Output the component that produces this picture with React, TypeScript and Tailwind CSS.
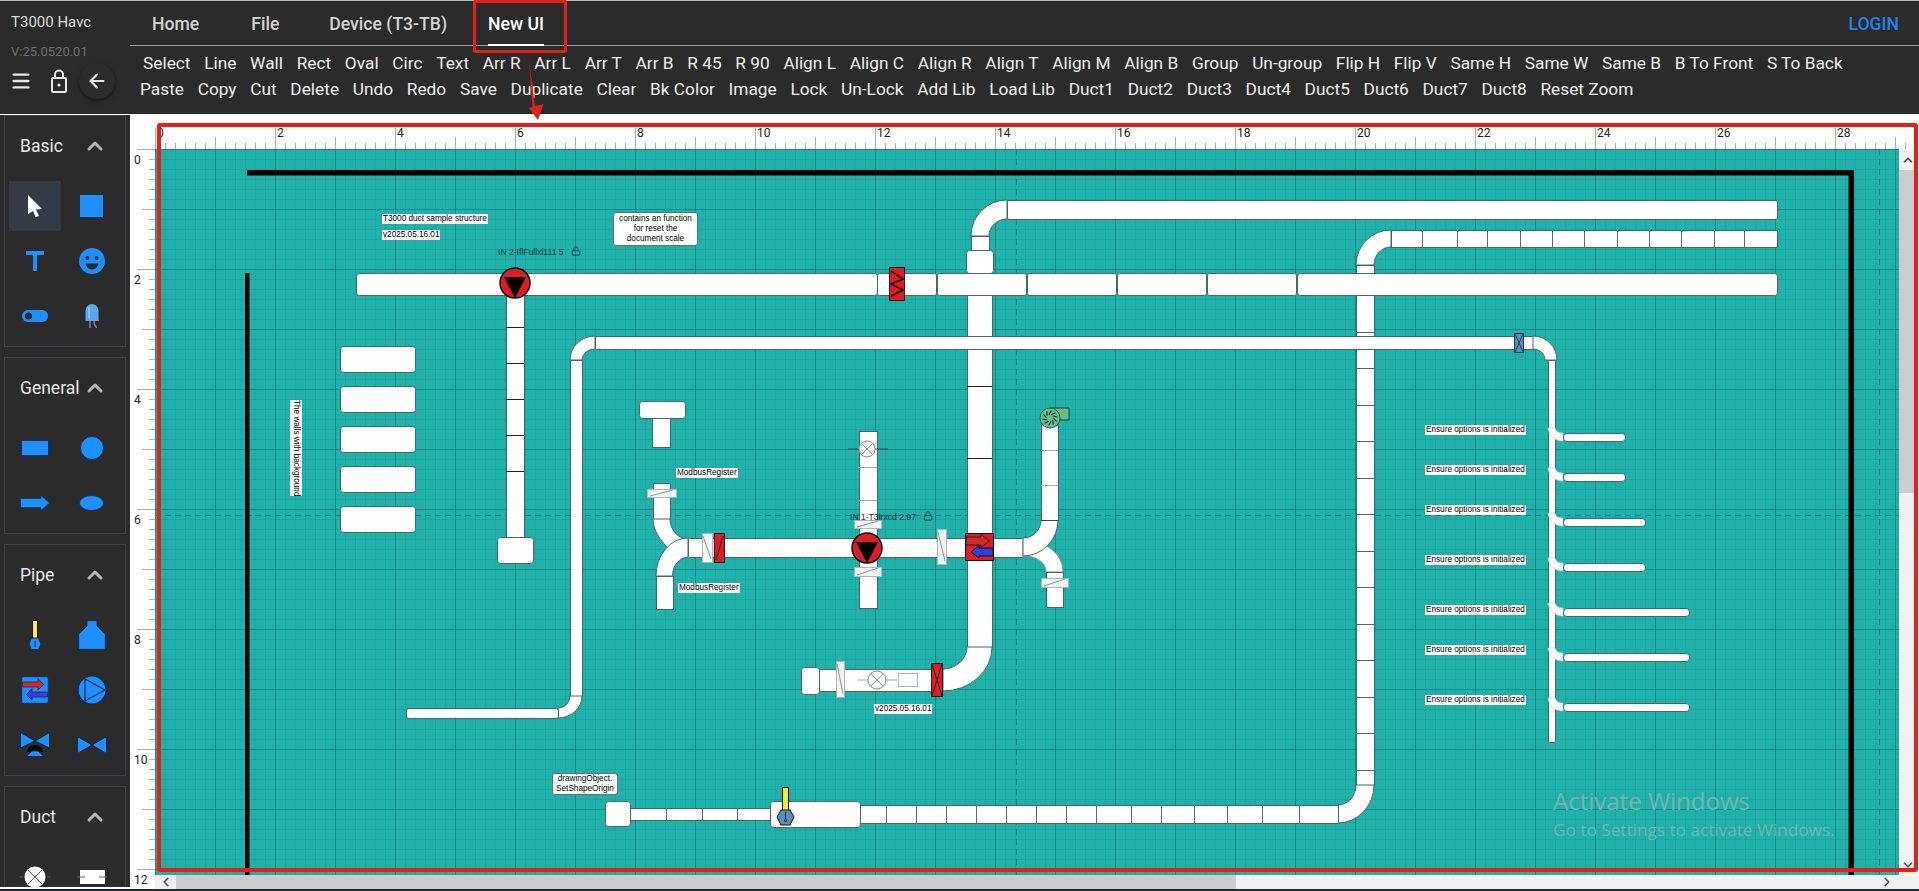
import { ChevronDown, ChevronLeft, ChevronRight, ChevronUp, ArrowLeft, Lock, LockOpen, Menu } from "lucide-react";
import type { ReactNode } from "react";

const row1 = ["Select", "Line", "Wall", "Rect", "Oval", "Circ", "Text", "Arr R", "Arr L", "Arr T", "Arr B", "R 45", "R 90", "Align L", "Align C", "Align R", "Align T", "Align M", "Align B", "Group", "Un-group", "Flip H", "Flip V", "Same H", "Same W", "Same B", "B To Front", "S To Back"];
const row2 = ["Paste", "Copy", "Cut", "Delete", "Undo", "Redo", "Save", "Duplicate", "Clear", "Bk Color", "Image", "Lock", "Un-Lock", "Add Lib", "Load Lib", "Duct1", "Duct2", "Duct3", "Duct4", "Duct5", "Duct6", "Duct7", "Duct8", "Reset Zoom"];

const BLUE = "#1e8fff";
const EDGE = "#45696b";

function Panel({ title, children }: { title: string; children: ReactNode }) {
  return (
    <div className="border border-[#3a424c]">
      <div className="flex h-[60px] items-center justify-between pl-[15px] pr-[18px]">
        <span className="text-[17.5px] text-[#e8e8e8]">{title}</span>
        <ChevronUp size={24} strokeWidth={3} className="text-[#b5b5b5]" />
      </div>
      <div className="grid grid-cols-[57px_57px] auto-rows-[55px] pb-[3px] pl-[1px] pt-[2px]">{children}</div>
    </div>
  );
}

function Cell({ children }: { children: ReactNode }) {
  return <div className="flex items-center justify-center">{children}</div>;
}

function Sidebar() {
  return (
    <aside className="mt-px flex h-[772px] w-[130px] shrink-0 flex-col gap-[10px] overflow-hidden bg-[#2b2b2b] px-[4px]">
      <Panel title="Basic">
        <Cell>
          <div className="flex h-[50px] w-[52px] items-center justify-center bg-[#343b45]">
            <svg width="16" height="24" viewBox="0 0 16 24"><path d="M1 1 L15 15 L9 15.5 L12 22 L8.5 23 L6 17 L1 20 Z" fill="#fff" /></svg>
          </div>
        </Cell>
        <Cell><div className="h-[22px] w-[23px] bg-[#1e8fff]" /></Cell>
        <Cell>
          <svg width="18" height="20" viewBox="0 0 18 20"><path d="M0 0H18V4H11V20H7V4H0Z" fill={BLUE} /></svg>
        </Cell>
        <Cell>
          <svg width="26" height="26" viewBox="0 0 26 26">
            <circle cx="13" cy="13" r="13" fill={BLUE} />
            <circle cx="8.5" cy="10" r="2" fill="#2b2b2b" />
            <circle cx="17.5" cy="10" r="2" fill="#2b2b2b" />
            <path d="M6.5 15.5 H19.5 C18.5 20 15.5 21.5 13 21.5 C10.5 21.5 7.5 20 6.5 15.5Z" fill="#2b2b2b" />
          </svg>
        </Cell>
        <Cell>
          <svg width="26" height="12" viewBox="0 0 26 12">
            <rect width="26" height="12" rx="6" fill={BLUE} />
            <circle cx="6.5" cy="6" r="3.6" fill="#2b2b2b" />
          </svg>
        </Cell>
        <Cell>
          <svg width="14" height="24" viewBox="0 0 14 24">
            <path d="M5 15 V24 M9 15 L9 19 L11.5 24" stroke="#8b8b8b" strokeWidth="1.4" fill="none" />
            <path d="M.5 17 V6.5 A6.5 6.5 0 0 1 13.5 6.5 V15 L14 17 Z" fill="#5aa6ec" />
            <rect x="3" y="3" width="2" height="11" fill="#82bff5" />
          </svg>
        </Cell>
      </Panel>
      <Panel title="General">
        <Cell><div className="h-[16px] w-[28px] border border-[#11385f] bg-[#1e8fff]" /></Cell>
        <Cell><div className="h-[24px] w-[24px] rounded-full border border-[#11385f] bg-[#1e8fff]" /></Cell>
        <Cell>
          <svg width="30" height="16" viewBox="0 0 30 16"><path d="M0.5 3.5H21V0.5L29.5 8L21 15.5V12.5H0.5Z" fill={BLUE} stroke="#11385f" strokeWidth="0.7" /></svg>
        </Cell>
        <Cell><div className="h-[16px] w-[25px] rounded-[50%] border border-[#11385f] bg-[#1e8fff]" /></Cell>
      </Panel>
      <Panel title="Pipe">
        <Cell>
          <svg width="14" height="30" viewBox="0 0 14 30">
            <rect x="4.5" y="0.5" width="5" height="21" fill="#ffee33" stroke="#111" />
            <path d="M3.5 18 H10.5 L13 24 L10.5 29.5 H3.5 L1 24 Z" fill={BLUE} stroke="#0e3157" />
            <path d="M7 21 V27" stroke="#0e3157" />
          </svg>
        </Cell>
        <Cell>
          <svg width="28" height="30" viewBox="0 0 28 30"><path d="M9 .7H19V6L27.3 14V29.3H.7V14L9 6Z" fill={BLUE} stroke="#0e3157" strokeLinejoin="round" /></svg>
        </Cell>
        <Cell>
          <svg width="28" height="28" viewBox="0 0 28 28">
            <rect x=".7" y=".7" width="26.6" height="26.6" rx="1.5" fill={BLUE} stroke="#0e3157" />
            <path d="M1.5 6 H17 V2.5 L22.5 8.5 L17 14 V11 H1.5Z" fill="#d12c2c" stroke="#222" strokeWidth=".7" />
            <path d="M26.5 16 H11 V12.5 L5.5 18.5 L11 24 V21 H26.5Z" fill="#3b3bd8" stroke="#222" strokeWidth=".7" />
          </svg>
        </Cell>
        <Cell>
          <svg width="30" height="30" viewBox="0 0 30 30">
            <circle cx="15" cy="15" r="14" fill={BLUE} stroke="#0e2b4c" strokeWidth="1.2" />
            <path d="M8 4 V26 L28 15 Z" fill="none" stroke="#0e2b4c" strokeWidth="1.2" />
          </svg>
        </Cell>
        <Cell>
          <svg width="30" height="25" viewBox="0 0 30 25">
            <path d="M.5 .5 L15 9 L29.5 .5 V16 L15 9 L.5 16Z" fill={BLUE} stroke="#0e2b4c" />
            <path d="M7 20 A8 7 0 0 1 23 20 Z" fill="#0a0a0a" />
            <path d="M6 24.5 L12 19 H18 L24 24.5Z" fill={BLUE} stroke="#0e2b4c" />
          </svg>
        </Cell>
        <Cell>
          <svg width="30" height="18" viewBox="0 0 30 18"><path d="M.5 .5 L15 9 L29.5 .5 V17.5 L15 9 L.5 17.5Z" fill={BLUE} stroke="#0e2b4c" /></svg>
        </Cell>
      </Panel>
      <Panel title="Duct">
        <Cell>
          <svg width="32" height="24" viewBox="0 0 32 24">
            <path d="M0 12H4M28 12H32" stroke="#555" />
            <circle cx="16" cy="12" r="10.5" fill="#fff" />
            <path d="M9 5L23 19M23 5L9 19" stroke="#555" />
          </svg>
        </Cell>
        <Cell>
          <svg width="30" height="16" viewBox="0 0 30 16">
            <rect x="3" y="1" width="25" height="14" fill="#fff" />
            <path d="M0 8H8M22 8H30" stroke="#666" />
          </svg>
        </Cell>
      </Panel>
    </aside>
  );
}

function Header() {
  return (
    <header className="flex h-[114px] shrink-0 border-t border-[#b9b9b9] bg-[#2b2b2b]">
      <div className="flex w-[130px] shrink-0 flex-col pl-[11px]">
        <div className="mt-[11px] text-[15px] leading-[20px] text-[#dcdcdc]">T3000 Havc</div>
        <div className="mt-[11px] text-[13px] leading-[18px] text-[#6f6f6f]">V:25.0520.01</div>
        <div className="mt-[2px] flex items-center">
          <Menu size={22} strokeWidth={2.6} className="ml-[-1px] text-[#e8e8e8]" />
          <svg width="16" height="24" viewBox="0 0 16 24" fill="none" stroke="#e8e8e8" strokeWidth="2" className="ml-[19px]">
            <rect x="1" y="9" width="14" height="14" rx="1" />
            <path d="M4 9 V5.5 A4 4 0 0 1 12 5.5 V9" />
            <circle cx="8" cy="16" r="1.6" fill="#e8e8e8" stroke="none" />
          </svg>
          <div className="ml-[12px] flex h-[36px] w-[36px] items-center justify-center rounded-full bg-[#2b2b2b] shadow-[0_2px_4px_rgba(0,0,0,0.5)]">
            <ArrowLeft size={22} strokeWidth={2.4} className="text-[#e8e8e8]" />
          </div>
        </div>
      </div>
      <div className="flex min-w-0 flex-1 flex-col">
        <nav className="flex h-[45px] shrink-0 items-center border-b border-[#9d9d9d] text-[17.6px] font-medium">
          <span className="ml-[22px] pt-[3px] text-[#d4d4d4]">Home</span>
          <span className="ml-[52px] pt-[3px] text-[#d4d4d4]">File</span>
          <span className="ml-[50px] pt-[3px] text-[#d4d4d4]">Device (T3-TB)</span>
          <span className="relative ml-[41px] flex h-[44px] items-center pt-[3px] text-white">
            New UI
            <span className="absolute bottom-[-1px] left-0 h-[2px] w-full bg-white" />
          </span>
          <span className="ml-auto pr-[20px] pt-[3px] text-[#1e82e6]">LOGIN</span>
        </nav>
        <div className="flex flex-col pl-[13px] pt-[4px] text-[17.3px] leading-[26px] text-[#eeeeee]">
          <div className="flex gap-x-[13.7px] whitespace-nowrap">
            {row1.map((t) => (
              <span key={t}>{t}</span>
            ))}
          </div>
          <div className="ml-[-3px] flex gap-x-[13.7px] whitespace-nowrap">
            {row2.map((t) => (
              <span key={t}>{t}</span>
            ))}
          </div>
        </div>
      </div>
    </header>
  );
}

function RulerTop() {
  const ticks = Array.from({ length: 176 }, (_, i) => i * 10);
  return (
    <div className="relative h-[35px] flex-1 overflow-hidden bg-white">
      <svg className="absolute inset-0 h-full w-full">
        {ticks.map((x) => {
          const h = x % 120 === 0 ? 21 : x % 60 === 0 ? 12 : 6;
          return <line key={x} x1={x + 0.5} x2={x + 0.5} y1={35 - h} y2={35} stroke="#adadad" />;
        })}
      </svg>
      {Array.from({ length: 15 }, (_, i) => i * 2).map((n) => (
        <span key={n} className="absolute top-[12px] text-[12px] leading-[14px] text-[#222]" style={{ left: n * 60 + 2 }}>
          {n}
        </span>
      ))}
    </div>
  );
}

function RulerLeft() {
  const ticks = Array.from({ length: 73 }, (_, i) => i * 10);
  return (
    <div className="relative w-[25px] shrink-0 bg-white">
      <svg className="absolute inset-0 h-full w-full overflow-visible">
        {ticks.map((y) => {
          const w = y % 120 === 0 ? 18 : y % 60 === 0 ? 13 : 6;
          return <line key={y} y1={y + 0.5} y2={y + 0.5} x1={25 - w} x2={25} stroke="#adadad" />;
        })}
      </svg>
      {Array.from({ length: 7 }, (_, i) => i * 2).map((n) => (
        <span key={n} className="absolute left-[4px] text-[12px] leading-[14px] text-[#222]" style={{ top: n * 60 + 4 }}>
          {n}
        </span>
      ))}
    </div>
  );
}

function D({ x, y, w, h, r = 1.5 }: { x: number; y: number; w: number; h: number; r?: number }) {
  return <rect x={x + 0.5} y={y + 0.5} width={w} height={h} rx={r} fill="#fff" stroke={EDGE} />;
}

function E({ d }: { d: string }) {
  return <path d={d} fill="#fff" stroke={EDGE} />;
}

function HSec({ xs, y1, y2, color = "#5b6f70" }: { xs: number[]; y1: number; y2: number; color?: string }) {
  return (
    <>
      {xs.map((x) => (
        <line key={x} x1={x + 0.5} x2={x + 0.5} y1={y1} y2={y2} stroke={color} />
      ))}
    </>
  );
}

function VSec({ ys, x1, x2, color = "#222" }: { ys: number[]; x1: number; x2: number; color?: string }) {
  return (
    <>
      {ys.map((y) => (
        <line key={y} y1={y + 0.5} y2={y + 0.5} x1={x1} x2={x2} stroke={color} />
      ))}
    </>
  );
}

// flange drawn as a thin white plate with one diagonal
function Flange({ x, y, w, h }: { x: number; y: number; w: number; h: number }) {
  const flat = w > h;
  return (
    <g>
      <rect x={x + 0.5} y={y + 0.5} width={w} height={h} fill="#f4f4f4" stroke="#a9b9b9" />
      {flat ? (
        <line x1={x + 3} y1={y + h - 1} x2={x + w - 3} y2={y + 1} stroke="#8a9a9a" />
      ) : (
        <line x1={x + 1} y1={y + 3} x2={x + w - 1} y2={y + h - 3} stroke="#8a9a9a" />
      )}
    </g>
  );
}

function Pump({ cx, cy }: { cx: number; cy: number }) {
  return (
    <g>
      <circle cx={cx} cy={cy} r="15" fill="#e01b24" stroke="#111" strokeWidth="1.5" />
      <path d={`M${cx - 11} ${cy - 6} H${cx + 11} L${cx} ${cy + 15} Z`} fill="#000" />
    </g>
  );
}

function Bulb({ cx, cy, r }: { cx: number; cy: number; r: number }) {
  const k = r * 0.7;
  return (
    <g stroke="#808e8e" fill="none">
      <circle cx={cx} cy={cy} r={r} fill="#fff" />
      <path d={`M${cx - k} ${cy - k}L${cx + k} ${cy + k}M${cx + k} ${cy - k}L${cx - k} ${cy + k}`} />
    </g>
  );
}

function Drawing() {
  const branches = [
    [437, 1625],
    [477, 1625],
    [522, 1645],
    [567, 1645],
    [612, 1689],
    [657, 1689],
    [707, 1689],
  ];
  const blades = Array.from({ length: 10 }, (_, i) => (i * Math.PI) / 5);
  return (
    <svg className="absolute inset-0 h-[726px] w-[1744px]" viewBox="155 149 1744 726">
      <g stroke="#1a7c9c" strokeDasharray="6 4" fill="none">
        <line x1="1016.5" x2="1016.5" y1="149" y2="875" />
        <line x1="1879.5" x2="1879.5" y1="149" y2="875" />
        <line x1="155" x2="1899" y1="515.5" y2="515.5" />
      </g>

      <rect x="247" y="170" width="1607" height="5.5" fill="#000" />
      <rect x="1848.5" y="170" width="5.5" height="705" fill="#000" />
      <rect x="245" y="273" width="4.5" height="602" fill="#000" />

      {[346, 386, 426, 466, 506].map((y) => (
        <D key={y} x={340} y={y} w={75} h={26} r={3} />
      ))}

      {/* upper supply run */}
      <D x={1007} y={200} w={770} h={19} />
      <E d="M1007 200 A36 36 0 0 0 971 236 L989 236 A18 17 0 0 1 1007 219 Z" />
      <D x={971} y={236} w={18} h={15} r={0} />
      <D x={966} y={250} w={27} h={23} r={3} />
      <D x={967} y={295} w={25} h={352} r={0} />
      <VSec ys={[386, 458, 647]} x1={967} x2={992} />
      <E d="M992 647 A49 44 0 0 1 943 691 L943 669 A24 22 0 0 0 967 647 Z" />

      <D x={1391} y={230} w={386} h={17} r={0} />
      <HSec xs={[1422, 1457, 1487, 1520, 1552, 1584, 1617, 1649, 1681, 1714, 1744]} y1={230} y2={248} />
      <E d="M1391 230 A35 35 0 0 0 1356 265 L1374 265 A17 18 0 0 1 1391 247 Z" />
      <D x={1356} y={265} w={18} h={8} r={0} />
      <D x={1356} y={295} w={18} h={490} r={0} />
      <VSec ys={[332, 368, 405, 441, 478, 514, 551, 587, 624, 660, 697, 733, 770]} x1={1356} x2={1374} color="#566" />
      <E d="M1374 785 A36 38 0 0 1 1338 823 L1338 805 A18 20 0 0 0 1356 785 Z" />

      {/* main horizontal */}
      <D x={356} y={273} w={521} h={22} r={3} />
      <D x={877} y={273} w={59} h={22} r={2} />
      <D x={937} y={273} w={89} h={22} r={2} />
      <D x={1027} y={273} w={89} h={22} r={2} />
      <D x={1117} y={273} w={89} h={22} r={2} />
      <D x={1207} y={273} w={89} h={22} r={2} />
      <D x={1297} y={273} w={480} h={22} r={3} />
      <rect x="889.5" y="267.5" width="15" height="33" fill="#e01b24" stroke="#222" />
      <path d="M891 271 L903 279 L891 284 L903 290 L891 296" fill="none" stroke="#111" strokeWidth="1.6" />
      <D x={506} y={295} w={18} h={242} r={0} />
      <VSec ys={[327, 363, 399, 435, 471]} x1={506} x2={524} />
      <D x={497} y={537} w={36} h={26} r={3} />
      <Pump cx={515} cy={283} />

      {/* loop */}
      <D x={595} y={336} w={938} h={13} r={0} />
      <E d="M1533 336 A24 24 0 0 1 1557 360 L1545 360 A12 11 0 0 0 1533 349 Z" />
      <D x={1548} y={360} w={7} h={382} r={1} />
      <E d="M595 336 A25 24 0 0 0 570 360 L582 360 A13 11 0 0 1 595 349 Z" />
      <D x={570} y={360} w={12} h={336} r={0} />
      <E d="M582 696 A24 22 0 0 1 558 718 L558 708 A12 12 0 0 0 570 696 Z" />
      <D x={406} y={708} w={152} h={10} r={2} />
      <rect x="1514.5" y="333.5" width="9" height="19" fill="#5c8fb8" stroke="#1c3e58" />
      <path d="M1515 334 L1523 352 M1523 334 L1515 352" stroke="#1c3e58" />

      {branches.map(([y, end]) => (
        <g key={y}>
          <path d={`M1548 ${y - 9} L1555 ${y - 9} C1556 ${y - 6} 1558 ${y - 4} 1563 ${y - 4} L1563 ${y + 4} C1555 ${y + 4} 1549 ${y - 1} 1548 ${y - 9} Z`} fill="#fff" stroke="#c3d0d0" strokeWidth="0.7" />
          <rect x="1563.5" y={y - 3.5} width={end - 1563} height="8" rx="3.5" fill="#fff" stroke={EDGE} />
        </g>
      ))}

      {/* T piece */}
      <D x={652} y={418} w={18} h={29} r={0} />
      <D x={639} y={401} w={46} h={17} r={3} />

      {/* center assembly */}
      <D x={653} y={483} w={17} h={36} r={0} />
      <E d="M653 519 C653 530 660 540 668 548 L688 540 C678 538 670 530 670 519 Z" />
      <E d="M688 538 A32 38 0 0 0 656 576 L672.5 576 A16 19 0 0 1 688 557 Z" />
      <D x={656} y={576} w={17} h={33} r={0} />
      <Flange x={647} y={489} w={29} h={8} />

      <D x={859} y={431} w={18} h={177} r={0} />
      <VSec ys={[467, 500]} x1={859} x2={877} color="#9aa" />
      <line x1="848" x2="888" y1="449" y2="449" stroke="#445" />
      <Bulb cx={867} cy={449} r={8} />
      <D x={688} y={538} w={335} h={19} r={1} />
      <Flange x={702} y={533} w={10} h={29} />
      <rect x="714.5" y="533.5" width="10" height="29" fill="#e01b24" stroke="#222" />
      <line x1="716" x2="723" y1="560" y2="536" stroke="#222" />
      <Flange x={854} y={520} w={27} h={8} />
      <Flange x={854} y={567} w={27} h={9} />
      <Pump cx={867} cy={548} />
      <Flange x={937} y={529} w={9} h={35} />
      <path d="M1023 540 C1040 540 1063 550 1063 572 L1046 572 C1046 562 1036 556 1023 556 Z" fill="#fff" stroke="#7f9494" />
      <E d="M1058 520 A35 36 0 0 1 1023 556 L1023 538 A18 18 0 0 0 1041 520 Z" />
      <D x={1041} y={423} w={17} h={97} r={0} />
      <VSec ys={[450, 485]} x1={1041} x2={1058} color="#a5b0b0" />
      <VSec ys={[520]} x1={1041} x2={1058} color="#444" />
      <D x={1046} y={572} w={17} h={35} r={0} />
      <Flange x={1041} y={578} w={27} h={9} />

      {/* heat exchanger */}
      <rect x="965.5" y="533.5" width="28" height="27" fill="#e01b24" stroke="#111" />
      <path d="M966 537 H981 V534.5 L989.5 541 L981 547.5 V545 H966 Z" fill="#d0292c" stroke="#222" />
      <path d="M993 548 H979 V545.5 L971 552 L979 558 V556 H993 Z" fill="#2f3fe0" stroke="#111" />

      {/* fan */}
      <path d="M1050 408 H1069 V420 H1060 V418 L1050 428 Z" fill="#69bb8c" stroke="#20412f" />
      <circle cx="1050" cy="418" r="10" fill="#69bb8c" stroke="#2a5d45" />
      {blades.map((a) => (
        <line key={a} x1={1050 + 3.5 * Math.cos(a)} y1={418 + 3.5 * Math.sin(a)} x2={1050 + 7.5 * Math.cos(a + 0.5)} y2={418 + 7.5 * Math.sin(a + 0.5)} stroke="#1c3a2a" strokeWidth="1.1" />
      ))}

      {/* lower run */}
      <D x={819} y={669} w={112} h={22} r={0} />
      <D x={801} y={667} w={18} h={27} r={3} />
      <Flange x={836} y={661} w={8} h={36} />
      <line x1="857" x2="897" y1="680" y2="680" stroke="#99a8a8" />
      <Bulb cx={877} cy={680} r={9} />
      <rect x="898.5" y="673.5" width="19" height="13" fill="#fff" stroke="#a9b6b6" />
      <rect x="931.5" y="663.5" width="11" height="33" fill="#e01b24" stroke="#222" />
      <path d="M932 664 L942 696 M942 664 L932 696" stroke="#222" />

      {/* bottom duct */}
      <D x={630} y={808} w={141} h={12} r={0} />
      <HSec xs={[666, 702, 737]} y1={808} y2={821} />
      <D x={605} y={801} w={25} h={25} r={3} />
      <D x={860} y={805} w={478} h={18} r={0} />
      <HSec xs={[886, 916, 946, 976, 1006, 1036, 1066, 1096, 1131, 1161, 1194, 1227, 1262, 1299]} y1={805} y2={824} />
      <D x={770} y={801} w={90} h={26} r={3} />
      <rect x="782.5" y="787.5" width="6" height="23" fill="#ffee22" stroke="#111" />
      <path d="M781 810 H790 L794 817 L790 825 H781 L777 817 Z" fill="#5c8fb8" stroke="#111" />
      <path d="M785.5 812 V820" stroke="#111" />
      <circle cx="785.5" cy="820.5" r="1" fill="none" stroke="#111" />
    </svg>
  );
}

function Canvas() {
  const tag = "absolute whitespace-nowrap bg-white px-px text-[8.2px] leading-[10px] text-black";
  return (
    <div className="relative flex-1 overflow-hidden bg-[#20b2aa] bg-[linear-gradient(to_right,rgba(10,100,100,0.42)_1px,transparent_1px),linear-gradient(to_bottom,rgba(10,100,100,0.42)_1px,transparent_1px),linear-gradient(to_right,rgba(10,100,100,0.14)_1px,transparent_1px),linear-gradient(to_bottom,rgba(10,100,100,0.14)_1px,transparent_1px)] [background-size:60px_60px,60px_60px,10px_10px,10px_10px] font-['Liberation_Sans',sans-serif]">
      <Drawing />
      <span className={`${tag} left-[227px] top-[65px]`}>T3000 duct sample structure</span>
      <span className={`${tag} left-[227px] top-[81px]`}>v2025.05.16.01</span>
      <span className="absolute left-[343px] top-[98px] whitespace-nowrap text-[8.6px] leading-[10px] text-[#12393a]">IN 2-IflFullxl111 5</span>
      <LockOpen size={10} className="absolute left-[416px] top-[97px] text-[#12393a]" />
      <div className="absolute left-[458px] top-[63px] flex h-[34px] w-[85px] flex-col items-center justify-center rounded-[3px] border border-[#577] bg-white text-[8.2px] leading-[10px] text-black">
        <span>contains an function</span>
        <span>for reset the</span>
        <span>document scale</span>
      </div>
      <span className="absolute left-[135px] top-[251px] whitespace-nowrap bg-white py-px text-[8.2px] leading-[10px] text-black [writing-mode:vertical-rl]">The walls with background</span>
      <span className={`${tag} left-[521px] top-[319px]`}>ModbusRegister</span>
      <span className={`${tag} left-[523px] top-[434px]`}>ModbusRegister</span>
      <span className="absolute left-[695px] top-[363px] whitespace-nowrap text-[8.6px] leading-[10px] text-[#12393a]">IN 1-T3lrxcd 2.97</span>
      <Lock size={10} className="absolute left-[768px] top-[362px] text-[#12393a]" />
      <span className={`${tag} left-[719px] top-[555px]`}>v2025.05.16.01</span>
      <div className="absolute left-[397px] top-[624px] flex h-[22px] w-[66px] flex-col items-center justify-center rounded-[3px] border border-[#577] bg-white text-[8.2px] leading-[10px] text-black">
        <span>drawingObject.</span>
        <span>SetShapeOrigin</span>
      </div>
      <span className={`${tag} left-[1270px] top-[276px]`}>Ensure options is initialized</span>
      <span className={`${tag} left-[1270px] top-[316px]`}>Ensure options is initialized</span>
      <span className={`${tag} left-[1270px] top-[356px]`}>Ensure options is initialized</span>
      <span className={`${tag} left-[1270px] top-[406px]`}>Ensure options is initialized</span>
      <span className={`${tag} left-[1270px] top-[456px]`}>Ensure options is initialized</span>
      <span className={`${tag} left-[1270px] top-[496px]`}>Ensure options is initialized</span>
      <span className={`${tag} left-[1270px] top-[546px]`}>Ensure options is initialized</span>
      <span className="absolute left-[1398px] top-[637px] whitespace-nowrap font-['Open_Sans',sans-serif] text-[24px] leading-[30px] text-[#70b5b1]">Activate Windows</span>
      <span className="absolute left-[1398px] top-[670px] whitespace-nowrap font-['Open_Sans',sans-serif] text-[17.2px] leading-[22px] text-[#70b5b1]">Go to Settings to activate Windows.</span>
    </div>
  );
}

function Workspace() {
  return (
    <main className="flex min-w-0 flex-1 flex-col bg-white">
      <div className="flex shrink-0">
        <div className="w-[25px] shrink-0" />
        <RulerTop />
      </div>
      <div className="flex min-h-0 flex-1">
        <RulerLeft />
        <Canvas />
        <div className="flex w-[20px] shrink-0 flex-col bg-[#f1f1f1]">
          <div className="flex h-[21px] w-[17px] items-center justify-center">
            <ChevronUp size={14} strokeWidth={3} className="text-[#555]" />
          </div>
          <div className="h-[323px] w-[16px] bg-[#cdcdcd]" />
          <div className="mt-auto flex h-[21px] w-[17px] items-center justify-center">
            <ChevronDown size={14} strokeWidth={3} className="text-[#555]" />
          </div>
        </div>
      </div>
      <div className="flex h-[14px] shrink-0">
        <div className="w-[25px] shrink-0 bg-white" />
        <div className="flex flex-1 items-center bg-[#f1f1f1]">
          <div className="flex w-[21px] justify-center">
            <ChevronLeft size={14} strokeWidth={3} className="text-[#555]" />
          </div>
          <div className="h-full w-[1060px] bg-[#cdcdcd]" />
          <div className="ml-auto mr-[25px] flex justify-center">
            <ChevronRight size={14} strokeWidth={3} className="text-[#555]" />
          </div>
        </div>
      </div>
    </main>
  );
}

export default function App() {
  return (
    <div className="relative flex h-[891px] w-[1919px] flex-col overflow-hidden bg-white font-['Roboto',sans-serif]">
      <Header />
      <div className="flex h-[775px] shrink-0">
        <Sidebar />
        <Workspace />
      </div>
      <div className="mt-auto h-[2px] shrink-0 bg-[#1f2a30]" />
      {/* red annotation drawn over the screenshot */}
      <div className="pointer-events-none absolute left-[473px] top-0 h-[53px] w-[94px] rounded-[2px] border-[3px] border-[#e32119]" />
      <div className="pointer-events-none absolute left-[157px] top-[123px] h-[749px] w-[1761px] rounded-[3px] border-[4px] border-[#e32119]" />
      <svg className="pointer-events-none absolute left-0 top-0 h-[891px] w-[1919px]" viewBox="0 0 1919 891">
        <path d="M529 60 L535 106 L543.5 104 L538 120 L529 108 L532.5 107 Z" fill="#e32119" />
      </svg>
    </div>
  );
}
